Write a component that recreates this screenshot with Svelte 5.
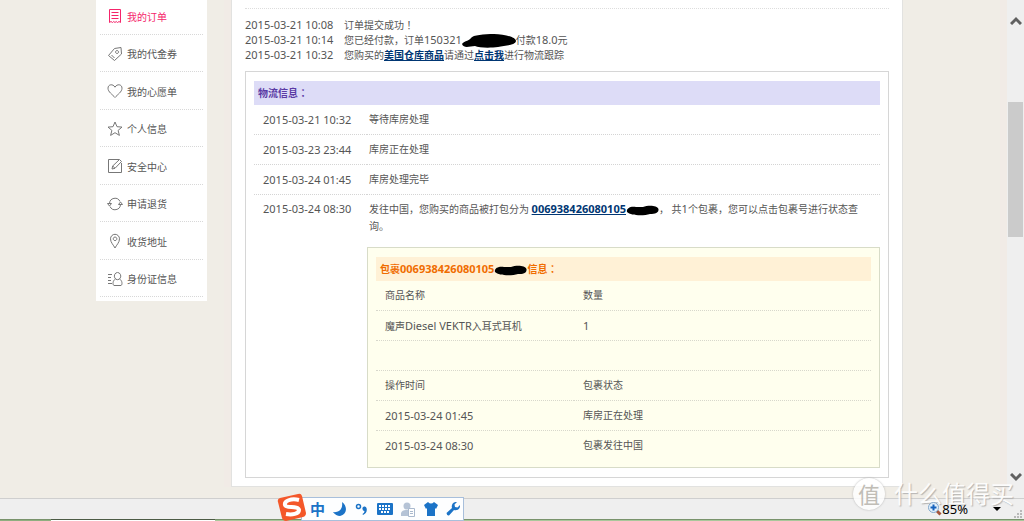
<script>
    let menu = [
        { icon: 'order', title: '我的订单' },
        { icon: 'tag', title: '我的代金券' },
        { icon: 'heart', title: '我的心愿单' },
        { icon: 'star', title: '个人信息' },
        { icon: 'edit', title: '安全中心' },
        { icon: 'sync', title: '申请退货' },
        { icon: 'pin', title: '收货地址' },
        { icon: 'idcard', title: '身份证信息' }
    ];

    let active = $state('order');

    const icons = {
        order: 'M2.5 1.5h11v13l-1.5-1-1.5 1-1.3-1-1.2 1-1.3-1-1.2 1-1.5-1-1.5 1zM4.5 4.500h7M4.500 7.500h7M4.500 10.500h7',
        tag: 'M1.500 9.500L7.500 2.500L14 1.500L14.500 8L7.500 14.500zM10 4.500a1.500 1.500 0 1 0 .1 0M4.500 9l3 3',
        heart: 'M8 14.500C5.500 11.500 1 9 1 5.200C1 1.200 6 .5 8 4.200C10 .5 15 1.200 15 5.200C15 9 10.500 11.500 8 14.500z',
        star: 'M8 1l2 4.700 5 .4-3.900 3.300 1.300 5L8 11.700l-4.400 2.700 1.300-5L1 6.100l5-.4z',
        edit: 'M12 1.500H1.500v13h13V5M5 11l.7-3L12.500 1.500l2 2L8 10.300zM5.700 8l2.300 2.300',
        sync: 'M2.500 7.500a5.500 5.500 0 0 1 10.500-2M13.500 8.500a5.500 5.500 0 0 1-10.500 2M.5 7.500h4l-2 2.500zM11.500 8.500h4l-2-2.500z',
        pin: 'M8 15C6.500 12 3.500 9.500 3.500 5.800a4.500 4.500 0 0 1 9 0C12.500 9.500 9.500 12 8 15zM8 4a1.800 1.800 0 1 0 .1 0',
        idcard: 'M1 3.500h4M1 6.500h3M1 9.500h3M1 12.500h4M10.500 1.500a3.200 3.600 0 1 0 .1 0M8.500 8C5.500 9.500 5.500 14 7 14.500h7c1.500-.5 1.500-5-1.500-6.500'
    };

    let steps = [
        { time: '2015-03-21 10:32', text: '等待库房处理' },
        { time: '2015-03-23 23:44', text: '库房正在处理' },
        { time: '2015-03-24 01:45', text: '库房处理完毕' }
    ];

    let states = [
        { time: '2015-03-24 01:45', text: '库房正在处理' },
        { time: '2015-03-24 08:30', text: '包裹发往中国' }
    ];
</script>

{#snippet scribble()}
    <svg class="scribble" width="33" height="11" viewBox="0 0 33 11" aria-hidden="true">
        <path d="M1 7C0 3 5 1 10 2L17 2C22 0 31 0 32.500 4C33 8 29 9 24 9C18 11 5 11 1 7z" />
    </svg>
{/snippet}

<div class="window">
    <div class="view">
        <div class="page">
            <nav>
                <ul>
                    {#each menu as item}
                    <li>
                        <a href="#{item.icon}" class:active={item.icon === active} onclick={() => active = item.icon}>
                            <svg width="16" height="16" viewBox="0 0 16 16" aria-hidden="true"><path d={icons[item.icon]} /></svg>
                            <span>{item.title}</span>
                        </a>
                    </li>
                    {/each}
                </ul>
            </nav>

            <main>
                <div class="log">
                    <div><span class="num when">2015-03-21 10:08</span>订单提交成功<span class="mark">！</span></div>
                    <div><span class="num when">2015-03-21 10:14</span>您已经付款，订单<span class="num">150321</span><svg class="scribble" width="54" height="14" viewBox="0 0 54 14" aria-hidden="true"><path d="M0 10C2 7 7 7 9 4C11 1 22 0 32 0C42 0 54 3 54 7C53 12 42 11 36 13C29 14 17 14 13 12C8 12 2 15 0 10z" /></svg>付款<span class="num">18.0</span>元</div>
                    <div><span class="num when">2015-03-21 10:32</span>您购买的<a href="#warehouse">美国仓库商品</a>请通过<a href="#track">点击我</a>进行物流跟踪</div>
                </div>

                <section class="box">
                    <h2>物流信息<span class="mark">：</span></h2>
                    <table>
                        <tbody>
                            {#each steps as step}
                            <tr><td class="num time">{step.time}</td><td class="what">{step.text}</td></tr>
                            {/each}
                            <tr class="last">
                                <td class="num time">2015-03-24 08:30</td>
                                <td>
                                    <p>发往中国，您购买的商品被打包分为 <a class="num parcel-no" href="#parcel">006938426080105{@render scribble()}</a>， 共<span class="num">1</span>个包裹，您可以点击包裹号进行状态查询。</p>

                                    <section class="box parcel">
                                        <h2>包裹<span class="num">006938426080105</span>{@render scribble()}信息<span class="mark">：</span></h2>
                                        <table>
                                            <tbody>
                                                <tr><td class="wide">商品名称</td><td>数量</td></tr>
                                                <tr><td>魔声<span class="num">Diesel VEKTR</span>入耳式耳机</td><td class="num">1</td></tr>
                                                <tr><td></td><td></td></tr>
                                                <tr><td>操作时间</td><td>包裹状态</td></tr>
                                                {#each states as state}
                                                <tr><td class="num">{state.time}</td><td>{state.text}</td></tr>
                                                {/each}
                                            </tbody>
                                        </table>
                                    </section>
                                </td>
                            </tr>
                        </tbody>
                    </table>
                </section>
            </main>
        </div>

        <div class="scrollbar">
            <button aria-label="向上滚动"><svg width="12" height="9" viewBox="0 0 12 9"><path d="M1 8l5-5 5 5" /></svg></button>
            <div class="track"><div class="thumb"></div></div>
            <button aria-label="向下滚动"><svg width="12" height="9" viewBox="0 0 12 9"><path d="M1 1l5 5 5-5" /></svg></button>
        </div>
    </div>

    <footer>
        <button class="zoom">
            <svg width="14" height="14" viewBox="0 0 14 14" aria-hidden="true">
                <path d="M8 8l4.500 4.500" stroke="#a4553d" stroke-width="3" />
                <circle cx="5.500" cy="5.500" r="5" fill="#e4f1fb" stroke="#7fa6cc" />
                <path d="M5.500 2.500v6M2.500 5.500h6" stroke="#1763bd" stroke-width="2" />
            </svg>
            <span>85%</span>
            <svg class="caret" width="8" height="4" viewBox="0 0 8 4" aria-hidden="true"><path d="M0 0h8L4 4z" /></svg>
        </button>
        <svg width="9" height="9" viewBox="0 0 9 9" fill="#b9b9b9" aria-hidden="true"><path d="M6 0h2v2h-2zM3 3h2v2h-2zM6 3h2v2h-2zM0 6h2v2h-2zM3 6h2v2h-2zM6 6h2v2h-2z" /></svg>
    </footer>
    <div class="taskbar"><i></i><i></i><i></i></div>

    <!-- input method bar floats over the status bar -->
    <div class="ime">
        <svg class="logo" width="30" height="28" viewBox="0 0 30 28" aria-hidden="true">
            <path d="M3 5L21 1Q24 0 25 3L29 20Q29 23 26 24L9 28Q6 28 5 25L1 9Q0 6 3 5z" fill="#f4582a" />
            <path d="M22 7C14 5 7 8 8 12C9 16 21 12 22 17C22 21 15 22 9 21" fill="none" stroke="#fff" stroke-width="4" />
        </svg>
        <div class="keys">
            <button class="zh">中</button>
            <button aria-label="半角"><svg width="14" height="14" viewBox="0 0 14 14"><path d="M9 0C15 4 14 13 7 14Q3 14 0 10C7 11 10 6 9 0z" /></svg></button>
            <button aria-label="标点"><svg width="14" height="14" viewBox="0 0 14 14"><circle cx="3.500" cy="4.500" r="2" fill="none" stroke="#1b73c7" stroke-width="1.500" /><path d="M7.500 7a2 2 0 0 1 4-1c1 3-.5 6-3.500 7l-.5-1q2-1 2-3-2 0-2-2z" /></svg></button>
            <button aria-label="软键盘"><svg width="16" height="12" viewBox="0 0 16 12"><rect width="16" height="12" rx="1" /><path d="M2 3h12M2 6h12M4 9h8" stroke="#fff" stroke-width="2" stroke-dasharray="2 1" /></svg></button>
            <button aria-label="用户"><svg width="15" height="15" viewBox="0 0 15 15"><g fill="#b5c3d6"><circle cx="6" cy="4" r="3.500" /><path d="M0 14V11Q1 8 5 8H8V14z" /></g><path d="M7.500 6.500h6v8h-6zM9 9.500h3M9 11.500h3" fill="#fff" stroke="#a9b9ce" /></svg></button>
            <button aria-label="皮肤"><svg width="14" height="14" viewBox="0 0 14 14"><path d="M4 0Q7 3 10 0L14 3 12 7 11 6V14H3V6L2 7 0 3z" /></svg></button>
            <button aria-label="设置"><svg width="14" height="14" viewBox="0 0 14 14"><path d="M11 0L8.500 2.500 9 5 11.500 5.500 14 3C14.500 7 11 9 8 8L3 13.500Q1 14 .5 11L6 6C5 3 7-.5 11 0z" /></svg></button>
        </div>
    </div>

    <div class="watermark"><b>值</b><span>什么值得买</span></div>
</div>

<style>
    :global(body) {
        margin: 0;
        background: #f0ede6;
    }

    .window {
        position: relative;
        overflow: hidden;
        font-family: "Noto Sans", "Noto Sans CJK SC", sans-serif;
        font-size: 10px;
        line-height: 15px;
        color: #555;
    }

    .view {
        display: flex;
    }

    .page {
        flex: 1;
        display: flex;
        align-items: flex-start;
        padding: 0 97px 11px 96px;
        border-right: 7px solid #f1ebe6;
    }

    ul, h2, p {
        margin: 0;
        padding: 0;
    }

    button {
        border: none;
        background: none;
        padding: 0;
        font: inherit;
    }

    svg {
        display: block;
        flex: none;
    }

    .num {
        font-size: 11px;
    }

    /* centred fullwidth punctuation */
    .mark {
        font-family: "Noto Sans CJK JP", sans-serif;
    }

    nav {
        flex: none;
        width: 111px;
        margin-right: 16px;
        padding-bottom: 4px;
        background: #fff;
    }

    ul {
        display: grid;
        grid-template-rows: repeat(8, 1fr);
        height: 300px;
        margin: -3px 4px 0;
        list-style: none;
    }

    li {
        display: flex;
        border-bottom: 1px dotted #d8d8d8;
    }

    li a {
        display: flex;
        align-items: center;
        gap: 4px;
        padding: 2px 0 0 7px;
        color: #555;
        text-decoration: none;
    }

    li span {
        padding-top: 2px;
    }

    li svg {
        fill: none;
        stroke: #777;
    }

    li a.active {
        color: #f5256b;
    }

    .active svg {
        stroke: #f5256b;
    }

    main {
        flex: 1;
        padding: 8px 13px 8px;
        background: #fff;
        border: 1px solid #e2e2e0;
        border-top: none;
        box-shadow: -7px 0 #f1ebe6;
        margin-left: 8px;
    }

    .log {
        padding: 8px 0 9px;
        border-top: 1px dotted #ddd;
    }

    .log div {
        height: 15px;
        white-space: nowrap;
    }

    .when {
        display: inline-block;
        width: 99px;
    }

    .log a, p a {
        color: #003673;
        font-weight: bold;
    }

    .scribble {
        display: inline-block;
        vertical-align: middle;
        fill: #000;
    }

    .box {
        border: 1px solid #d6d6d6;
        padding: 9px 8px;
    }

    h2 {
        height: 24px;
        padding-left: 4px;
        font-size: 10px;
        line-height: 24px;
        color: #5b3ba5;
        background: #dddcf7;
    }

    table {
        width: 100%;
        border-collapse: separate;
        border-spacing: 0;
        table-layout: fixed;
    }

    td {
        height: 29px;
        padding: 0 0 0 9px;
        border-bottom: 1px dotted #d4d4d4;
        line-height: 17px;
    }

    .time {
        width: 104px;
    }

    .what {
        padding-left: 2px;
    }

    .last > td {
        padding-top: 5px;
        vertical-align: top;
        border: none;
    }

    .last > td:last-child {
        padding-left: 0;
    }

    p {
        padding: 0 16px 12px 2px;
    }

    .parcel {
        padding-bottom: 6px;
        background: #ffffee;
        border-color: #d8dcc8;
    }

    .parcel h2 {
        color: #f06c00;
        background: #fff1d6;
    }

    .parcel td {
        border-color: #d8d8cc;
    }

    .parcel tr:last-child td {
        border-color: transparent;
    }

    .wide {
        width: 40%;
        box-sizing: border-box;
    }

    .scrollbar {
        flex: none;
        display: flex;
        flex-direction: column;
        align-items: center;
        width: 17px;
        padding: 16px 0;
        background: #efefef;
    }

    .scrollbar path {
        fill: none;
        stroke: #606060;
        stroke-width: 3;
    }

    .track {
        flex: 1;
        width: 15px;
    }

    .thumb {
        height: 135px;
        margin-top: 77px;
        background: #cbcbcb;
    }

    footer {
        display: flex;
        justify-content: flex-end;
        align-items: flex-end;
        height: 20px;
        padding-right: 1px;
        border-top: 1px solid #cfcfcf;
        background: #efefef;
    }

    .zoom {
        position: relative;
        z-index: 1;
        display: flex;
        align-items: center;
        height: 20px;
        margin-right: 13px;
        font-size: 13px;
        color: #000;
    }

    .caret {
        margin-left: 25px;
    }

    .taskbar {
        display: flex;
        height: 2px;
        background: #8fae80;
    }

    .taskbar i {
        width: 5%;
        border-top: 1px solid #79936c;
    }

    .taskbar i:nth-child(2) {
        width: 16%;
        border-color: #4c5b45;
        background: #fff;
    }

    .taskbar i:last-child {
        flex: 1;
        background: #a9c79b;
    }

    .ime {
        position: absolute;
        left: 277px;
        bottom: 0;
        display: flex;
        align-items: flex-end;
    }

    .logo {
        position: relative;
        z-index: 1;
    }

    .keys {
        display: flex;
        align-items: center;
        gap: 8px;
        height: 22px;
        margin-left: -6px;
        padding: 0 3px 0 8px;
        background: #fdfeff;
        border: 1px solid #a8bfdb;
    }

    .keys svg {
        fill: #1b73c7;
    }

    .zh {
        color: #1b73c7;
        font-size: 15px;
        font-weight: bold;
    }

    .watermark {
        position: absolute;
        right: 10px;
        bottom: 11px;
        display: flex;
        align-items: center;
        gap: 9px;
        color: #fff;
        font-size: 24px;
        line-height: 32px;
        text-shadow: 1px 1px 1px #aaa;
        pointer-events: none;
        opacity: .85;
    }

    .watermark b {
        width: 32px;
        height: 32px;
        border-radius: 50%;
        background: #fff;
        box-shadow: 0 0 2px #aaa;
        color: #b8b5ae;
        font-size: 22px;
        font-weight: normal;
        text-align: center;
        text-shadow: none;
    }
</style>
